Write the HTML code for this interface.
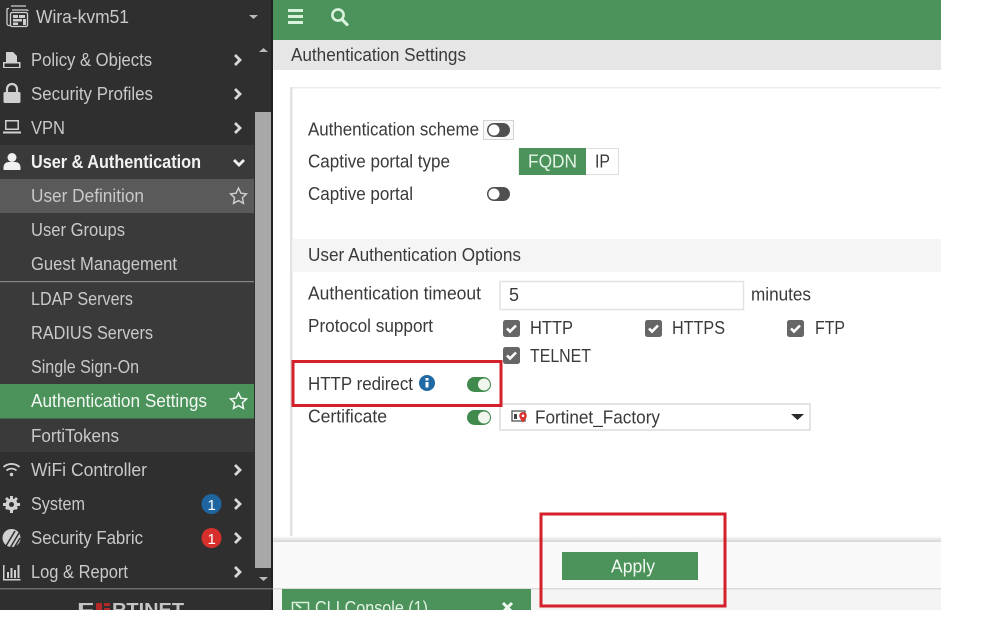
<!DOCTYPE html>
<html><head><meta charset="utf-8"><style>
html,body{margin:0;padding:0;background:#fff;width:999px;height:640px;overflow:hidden}
svg{display:block}
text{font-family:"Liberation Sans",sans-serif;font-size:18px}
.s text{fill:#c9c9c9}
.m text{fill:#3a3a3a}
</style></head><body>
<svg width="999" height="640" viewBox="0 0 999 640" xmlns="http://www.w3.org/2000/svg">
<defs><linearGradient id="sh" x1="0" y1="0" x2="0" y2="1"><stop offset="0" stop-color="#fff"/><stop offset="1" stop-color="#d4d4d4"/></linearGradient></defs>
<rect width="999" height="640" fill="#fff"/>
<!-- main -->
<rect x="273" y="0" width="668" height="40" fill="#4b925b"/>
<rect x="273" y="40" width="668" height="30" fill="#e6e6e6"/>
<rect x="273" y="70" width="668" height="473" fill="#fff"/>
<rect x="291" y="87" width="650" height="1.500" fill="#ececec"/>
<rect x="290" y="87" width="2.500" height="456" fill="#e2e2e2"/>
<rect x="292" y="239" width="649" height="33" fill="#f5f5f5"/>
<rect x="273" y="536" width="668" height="6" fill="url(#sh)"/>
<rect x="273" y="542" width="668" height="47" fill="#f9f9f9"/>
<rect x="273" y="588" width="668" height="22" fill="#f4f4f4"/>
<rect x="273" y="588" width="668" height="1.500" fill="#dcdcdc"/>
<!-- top icons -->
<g fill="#d8f2dc"><rect x="288" y="9" width="15" height="3"/><rect x="288" y="15" width="15" height="3"/><rect x="288" y="21" width="15" height="3"/></g>
<circle cx="338" cy="15" r="5.600" fill="none" stroke="#d8f2dc" stroke-width="2.600"/><path d="M342 19.500l5 5" stroke="#d8f2dc" stroke-width="3.200" stroke-linecap="round"/>
<!-- inputs (drawn beneath their text) -->
<rect x="500" y="281.500" width="243.500" height="28" fill="#fff" stroke="#e2e2e2" stroke-width="1.500"/>
<rect x="500" y="404" width="310" height="26" fill="#fff" stroke="#dcdcdc" stroke-width="1.500"/>
<path d="M791 414h13l-6.500 6z" fill="#2a2a2a"/>
<rect x="519" y="148.500" width="99.500" height="26" fill="#fff" stroke="#dedede"/>
<rect x="519" y="148" width="67" height="27" fill="#4b925b"/>
<text x="528" y="167.500" textLength="49" lengthAdjust="spacingAndGlyphs" style="fill:#e4f4e6">FQDN</text>
<g class="m">
<text x="291" y="61" textLength="175" lengthAdjust="spacingAndGlyphs">Authentication Settings</text>
<text x="308" y="135.500" textLength="171" lengthAdjust="spacingAndGlyphs">Authentication scheme</text>
<text x="308" y="167.500" textLength="142" lengthAdjust="spacingAndGlyphs">Captive portal type</text>
<text x="308" y="200" textLength="105" lengthAdjust="spacingAndGlyphs">Captive portal</text>
<text x="308" y="261" textLength="213" lengthAdjust="spacingAndGlyphs">User Authentication Options</text>
<text x="308" y="299.500" textLength="173" lengthAdjust="spacingAndGlyphs">Authentication timeout</text>
<text x="308" y="332" textLength="125" lengthAdjust="spacingAndGlyphs">Protocol support</text>
<text x="308" y="390" textLength="105" lengthAdjust="spacingAndGlyphs">HTTP redirect</text>
<text x="308" y="422.500" textLength="79" lengthAdjust="spacingAndGlyphs">Certificate</text>
<text x="751" y="300.500" textLength="60" lengthAdjust="spacingAndGlyphs">minutes</text>
<text x="530" y="334" textLength="43" lengthAdjust="spacingAndGlyphs">HTTP</text>
<text x="672" y="334" textLength="53" lengthAdjust="spacingAndGlyphs">HTTPS</text>
<text x="815" y="334" textLength="30" lengthAdjust="spacingAndGlyphs">FTP</text>
<text x="530" y="362" textLength="61" lengthAdjust="spacingAndGlyphs">TELNET</text>
<text x="509" y="301">5</text>
<text x="535" y="423.500" textLength="125" lengthAdjust="spacingAndGlyphs">Fortinet_Factory</text>
<text x="595" y="167.500" textLength="15" lengthAdjust="spacingAndGlyphs">IP</text>
</g>
<!-- scheme toggle -->
<rect x="483.500" y="120.500" width="30" height="19" fill="#f8f8f8" stroke="#d4d4d4"/>
<rect x="487" y="123" width="23" height="14" rx="7" fill="#505050"/><circle cx="494" cy="130" r="5.500" fill="#fff"/>
<rect x="487" y="187" width="23" height="14" rx="7" fill="#505050"/><circle cx="494" cy="194" r="5.500" fill="#fff"/>
<!-- cert icon -->
<rect x="512" y="411" width="13" height="10" fill="#fff" stroke="#555" stroke-width="1.300"/><rect x="514" y="414" width="3" height="5" fill="#444"/>
<path d="M523 412a3.800 3.800 0 0 1 3.800 3.800c0 2.500-3.800 6.700-3.800 6.700s-3.800-4.200-3.800-6.700a3.800 3.800 0 0 1 3.800-3.800z" fill="#d8332f"/><circle cx="523" cy="415.800" r="1.300" fill="#fff"/>
<!-- checkboxes -->
<g>
<rect x="503" y="320" width="17" height="17" rx="2.500" fill="#666"/><path d="M507 328.500l3 3 6-6" fill="none" stroke="#fff" stroke-width="2.600"/>
<rect x="645" y="320" width="17" height="17" rx="2.500" fill="#666"/><path d="M649 328.500l3 3 6-6" fill="none" stroke="#fff" stroke-width="2.600"/>
<rect x="787" y="320" width="17" height="17" rx="2.500" fill="#666"/><path d="M791 328.500l3 3 6-6" fill="none" stroke="#fff" stroke-width="2.600"/>
<rect x="503" y="347" width="17" height="17" rx="2.500" fill="#666"/><path d="M507 355.500l3 3 6-6" fill="none" stroke="#fff" stroke-width="2.600"/>
</g>
<!-- toggles on -->
<rect x="467" y="377" width="24" height="15" rx="7.500" fill="#3f8a4c"/><circle cx="484" cy="384.500" r="6" fill="#f0f5ee"/>
<rect x="467" y="410" width="24" height="15" rx="7.500" fill="#3f8a4c"/><circle cx="484" cy="417.500" r="6" fill="#f0f5ee"/>
<!-- info -->
<circle cx="427" cy="383" r="8" fill="#1f6aa5"/><rect x="425.500" y="382" width="3" height="5.500" fill="#fff"/><rect x="425.500" y="378" width="3" height="2.600" fill="#fff"/>
<!-- apply -->
<rect x="562" y="552" width="136" height="28" fill="#4b925b"/>
<text x="611" y="572.500" textLength="44" lengthAdjust="spacingAndGlyphs" style="fill:#f0f7f0">Apply</text>
<!-- CLI tab -->
<rect x="282" y="589" width="249" height="21" fill="#4b925b"/>
<rect x="292.500" y="602.500" width="16" height="12" fill="none" stroke="#d8f2dc" stroke-width="1.500"/>
<path d="M296 604l5 4" fill="none" stroke="#d8f2dc" stroke-width="2"/>
<text x="315" y="614" textLength="113" lengthAdjust="spacingAndGlyphs" style="fill:#e4f4e6">CLI Console (1)</text>
<path d="M503 603l9 9M512 603l-9 9" stroke="#eef8ef" stroke-width="3"/>
<rect x="0" y="610" width="999" height="30" fill="#fff"/>
<rect x="941" y="0" width="58" height="640" fill="#fff"/>
<!-- red boxes -->
<rect x="293" y="361.500" width="208" height="44" fill="none" stroke="#d3202a" stroke-width="3"/>
<rect x="541" y="514" width="184" height="92" fill="none" stroke="#d3202a" stroke-width="3"/>
<!-- sidebar -->
<rect x="0" y="0" width="273" height="610" fill="#2f2f2f"/>
<rect x="271" y="0" width="2" height="610" fill="#222"/>
<rect x="0" y="145" width="254" height="307" fill="#3a3a3a"/>
<rect x="0" y="179" width="254" height="34" fill="#5a5a5a"/>
<rect x="0" y="281" width="254" height="1.200" fill="#858585"/>
<rect x="0" y="384" width="254" height="34.500" fill="#4b925b"/>
<rect x="255" y="112" width="16" height="456" fill="#a8a8a8"/>
<path d="M259 52l4.500-4 4.500 4z" fill="#bbb"/><path d="M259 577l4.500 4 4.500-4z" fill="#bbb"/>
<path d="M249 15l4.500 4 4.500-4z" fill="#bbb"/>
<rect x="0" y="588" width="273" height="1.500" fill="#6a6a6a"/>
<g class="s">
<text x="36" y="23" textLength="93" lengthAdjust="spacingAndGlyphs">Wira-kvm51</text>
<text x="31" y="66" textLength="121" lengthAdjust="spacingAndGlyphs">Policy &amp; Objects</text>
<text x="31" y="100" textLength="122" lengthAdjust="spacingAndGlyphs">Security Profiles</text>
<text x="31" y="134" textLength="34" lengthAdjust="spacingAndGlyphs">VPN</text>
<text x="31" y="168" textLength="170" lengthAdjust="spacingAndGlyphs" style="fill:#f2f2f2;font-weight:bold">User &amp; Authentication</text>
<text x="31" y="202" textLength="113" lengthAdjust="spacingAndGlyphs">User Definition</text>
<text x="31" y="236" textLength="94" lengthAdjust="spacingAndGlyphs">User Groups</text>
<text x="31" y="270" textLength="146" lengthAdjust="spacingAndGlyphs">Guest Management</text>
<text x="31" y="305" textLength="102" lengthAdjust="spacingAndGlyphs">LDAP Servers</text>
<text x="31" y="339" textLength="122" lengthAdjust="spacingAndGlyphs">RADIUS Servers</text>
<text x="31" y="373" textLength="108" lengthAdjust="spacingAndGlyphs">Single Sign-On</text>
<text x="31" y="407" textLength="176" lengthAdjust="spacingAndGlyphs" style="fill:#f4f8f4">Authentication Settings</text>
<text x="31" y="442" textLength="88" lengthAdjust="spacingAndGlyphs">FortiTokens</text>
<text x="31" y="476" textLength="116" lengthAdjust="spacingAndGlyphs">WiFi Controller</text>
<text x="31" y="510" textLength="54" lengthAdjust="spacingAndGlyphs">System</text>
<text x="31" y="544" textLength="112" lengthAdjust="spacingAndGlyphs">Security Fabric</text>
<text x="31" y="578" textLength="97" lengthAdjust="spacingAndGlyphs">Log &amp; Report</text>
</g>
<!-- chevrons -->
<g fill="none" stroke="#d8d8d8" stroke-width="2.800">
<path d="M235 55l5 5-5 5M235 89l5 5-5 5M235 123l5 5-5 5M235 465l5 5-5 5M235 499l5 5-5 5M235 533l5 5-5 5M235 567l5 5-5 5"/>
<path d="M234 160l5 5 5-5" stroke="#f2f2f2"/>
</g>
<!-- stars -->
<path d="M238.500 188l2.400 5.200 5.600.7-4.100 3.900 1.100 5.600-5-2.800-5 2.800 1.100-5.600-4.100-3.900 5.600-.7z" fill="none" stroke="#d0d0d0" stroke-width="1.400"/>
<path d="M238.500 393l2.400 5.200 5.600.7-4.100 3.900 1.100 5.600-5-2.800-5 2.800 1.100-5.600-4.100-3.900 5.600-.7z" fill="none" stroke="#f4f8f4" stroke-width="1.500"/>
<!-- badges -->
<circle cx="211.500" cy="504" r="10" fill="#1f659f"/><circle cx="211.500" cy="538" r="10" fill="#d7302c"/>
<text x="207.500" y="510" style="fill:#fff;font-size:15px">1</text>
<text x="207.500" y="544" style="fill:#fff;font-size:15px">1</text>
<!-- sidebar icons -->
<g fill="#d0d0d0">
<path d="M6 52h7l4 4v6h3.500v6H3v-6h3zM4.500 63.500v3.500h14.500v-3.500z" fill-rule="evenodd"/>
<path d="M5 92h14a1.500 1.500 0 0 1 1.500 1.500v8a1.500 1.500 0 0 1-1.500 1.500H5a1.500 1.500 0 0 1-1.500-1.500v-8A1.500 1.500 0 0 1 5 92z"/>
<path d="M7 92v-3a5 5 0 0 1 10 0v3" fill="none" stroke="#d0d0d0" stroke-width="2.200"/>
<path d="M5 120h14v10H5zM6.500 121.500v7h11v-7z" fill-rule="evenodd"/><rect x="3" y="131.500" width="18" height="2"/>
<circle cx="12" cy="157.500" r="4.500" fill="#f0f0f0"/><path d="M3.500 170v-3a5 5 0 0 1 5-5h7a5 5 0 0 1 5 5v3z" fill="#f0f0f0"/>
<circle cx="11.500" cy="474.500" r="1.700"/>
<path d="M3.500 467a12 12 0 0 1 16 0M6.500 470.500a7.500 7.500 0 0 1 10 0" fill="none" stroke="#d0d0d0" stroke-width="1.800"/>
<circle cx="11.500" cy="504.500" r="6"/>
<path d="M10 496h3v17h-3zM3 503h17v3H3zM5 499l2-2 11 11-2 2zM18 499l-2-2-11 11 2 2z"/>
<circle cx="11.500" cy="504.500" r="2.500" fill="#2f2f2f"/>
<circle cx="11.500" cy="538" r="9"/>
<path d="M6 546l9-15M10 548l9-15M14 548l6-10" stroke="#2f2f2f" stroke-width="1.500" fill="none"/>
<path d="M3 565h1.500v14h16v1.500H3z"/><rect x="7" y="572" width="2" height="6"/><rect x="10.500" y="568" width="2" height="10"/><rect x="14" y="570" width="2" height="8"/><rect x="17.500" y="565" width="2" height="13"/>
</g>
<!-- device icon -->
<g fill="none" stroke="#cfcfcf" stroke-width="1.300">
<path d="M11 6h15M9 8.500h-1a1 1 0 0 0-1 1v14a2 2 0 0 0 2 2h1"/>
<path d="M12 10h15a1 1 0 0 1 1 1"/>
<rect x="10.500" y="12.500" width="17" height="14" rx="1.500"/>
</g>
<g fill="#cfcfcf"><rect x="13" y="15" width="5" height="3"/><rect x="19" y="15" width="6" height="3"/><rect x="13" y="19" width="9" height="2.500"/><rect x="13" y="22.500" width="5" height="2.500"/><rect x="23" y="19" width="3" height="6"/></g>
<!-- logo -->
<text x="77" y="616" textLength="17" lengthAdjust="spacingAndGlyphs" style="font-size:18px;font-weight:bold;fill:#c4c4c4">F</text>
<rect x="96" y="603" width="6" height="7" fill="#b22a28"/><rect x="104" y="603" width="6" height="3" fill="#b22a28"/><rect x="104" y="608" width="6" height="2" fill="#b22a28"/>
<text x="112" y="616" textLength="72" lengthAdjust="spacingAndGlyphs" style="font-size:18px;font-weight:bold;fill:#c4c4c4">RTINET</text>
<rect x="0" y="610" width="273" height="30" fill="#fff"/>
</svg>
</body></html>
